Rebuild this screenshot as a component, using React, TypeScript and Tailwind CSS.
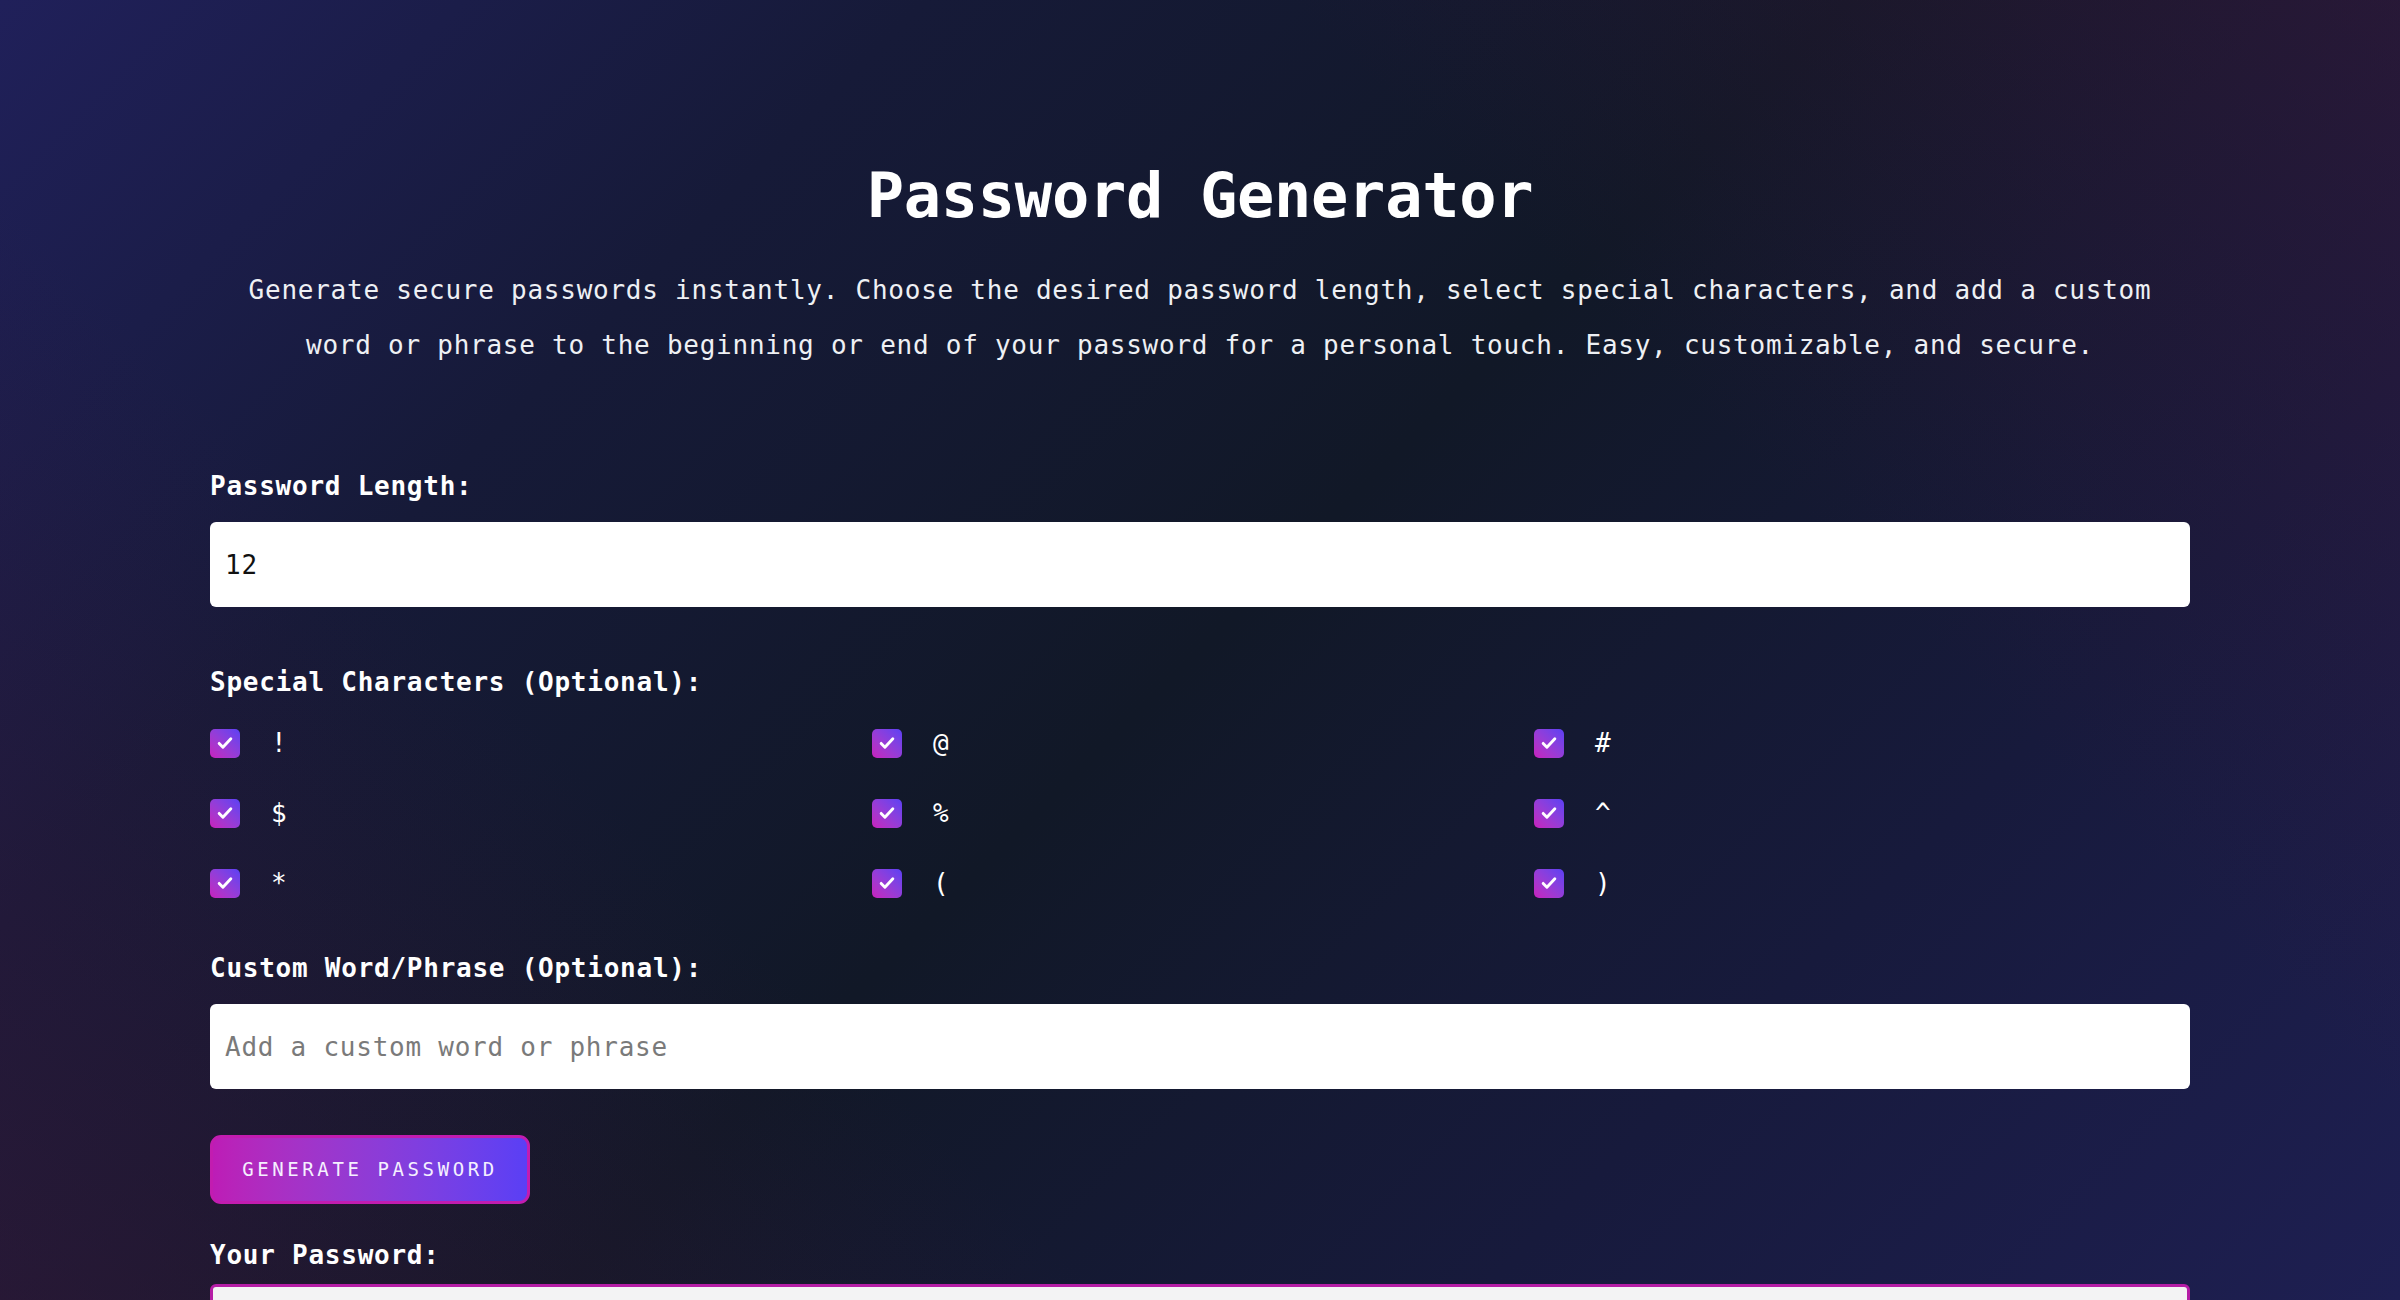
import React, { useState } from 'react';

const SPECIALS = ['!', '@', '#', '$', '%', '^', '*', '(', ')'];

// Gradient checkbox with a white tick
const CharBox: React.FC<{ char: string; checked: boolean; onToggle: () => void }> = ({ char, checked, onToggle }) => (
  <label className="flex items-center h-[36px] cursor-pointer select-none">
    <span
      onClick={onToggle}
      className={`w-[30px] h-[29px] rounded-[5px] flex items-center justify-center shrink-0 ${
        checked ? 'bg-gradient-to-tr from-[#c81cbc] to-[#5a3ff4]' : 'bg-white'
      }`}
    >
      {checked && (
        <svg viewBox="0 0 24 24" className="w-[20px] h-[20px]" fill="none" stroke="white" strokeWidth="3.5" strokeLinecap="round" strokeLinejoin="round">
          <path d="M5 12.5l4.5 4.5L19 7" />
        </svg>
      )}
    </span>
    <span className="ml-[31px] text-[26px] tracking-[0.75px] text-white leading-none">{char}</span>
  </label>
);

export default function App() {
  const [length, setLength] = useState('12');
  const [custom, setCustom] = useState('');
  const [selected, setSelected] = useState<string[]>(SPECIALS);
  const [password, setPassword] = useState('');

  const toggle = (c: string) =>
    setSelected((prev) => (prev.includes(c) ? prev.filter((x) => x !== c) : [...prev, c]));

  const generate = () => {
    const pool = 'abcdefghijklmnopqrstuvwxyzABCDEFGHIJKLMNOPQRSTUVWXYZ0123456789' + selected.join('');
    const n = Math.max(1, parseInt(length) || 12);
    let out = '';
    for (let i = 0; i < n; i++) out += pool[Math.floor(Math.random() * pool.length)];
    setPassword(out + custom);
  };

  return (
    <div className="min-h-screen bg-fixed bg-[linear-gradient(45deg,rgba(70,22,60,0.38)_0%,rgba(70,22,60,0)_30%,rgba(70,22,60,0)_70%,rgba(70,22,60,0.38)_100%),linear-gradient(135deg,#20205a_0%,#161a38_25%,#111827_50%,#171a3c_75%,#1e1f52_100%)] font-['DejaVu_Sans_Mono',monospace] text-white">
      <div className="w-[1980px] mx-auto pt-[159px] pb-[60px] flex flex-col">
        <h1 className="text-[62px] leading-[74px] font-bold text-center tracking-[-0.3px]">Password Generator</h1>
        <p className="mt-[30px] text-[26px] leading-[55px] tracking-[0.75px] text-center text-[#eef0f4]">
          Generate secure passwords instantly. Choose the desired password length, select special characters, and add a custom word or phrase to the beginning or end of your password for a personal touch. Easy, customizable, and secure.
        </p>

        <label className="mt-[95px] text-[26px] leading-[36px] font-bold tracking-[0.75px]">Password Length:</label>
        <input
          type="number"
          value={length}
          onChange={(e) => setLength(e.target.value)}
          className="mt-[18px] h-[85px] w-full rounded-[6px] bg-white text-[#111] px-[15px] text-[26px] tracking-[0.75px] outline-none [appearance:textfield] [&::-webkit-inner-spin-button]:appearance-none"
        />

        <div className="mt-[57px] text-[26px] leading-[36px] font-bold tracking-[0.75px]">Special Characters (Optional):</div>
        <div className="mt-[25px] grid grid-cols-[662px_662px_1fr] gap-y-[34px]">
          {SPECIALS.map((c) => (
            <CharBox key={c} char={c} checked={selected.includes(c)} onToggle={() => toggle(c)} />
          ))}
        </div>

        <label className="mt-[49px] text-[26px] leading-[36px] font-bold tracking-[0.75px]">Custom Word/Phrase (Optional):</label>
        <input
          type="text"
          value={custom}
          onChange={(e) => setCustom(e.target.value)}
          placeholder="Add a custom word or phrase"
          className="mt-[18px] h-[85px] w-full rounded-[6px] bg-white text-[#111] px-[15px] text-[26px] tracking-[0.75px] outline-none placeholder:text-[#7a7a7a]"
        />

        <div className="mt-[46px]">
          <button
            onClick={generate}
            className="h-[69px] w-[320px] rounded-[11px] border-[3px] border-[#c21cb0] bg-gradient-to-r from-[#bd1cb6] to-[#5a3ff5] text-[19px] tracking-[3.6px] text-[#f5f0ff] cursor-pointer"
          >
            GENERATE PASSWORD
          </button>
        </div>

        <label className="mt-[33px] text-[26px] leading-[36px] font-bold tracking-[0.75px]">Your Password:</label>
        <input
          type="text"
          readOnly
          value={password}
          className="mt-[11px] h-[85px] w-full rounded-[6px] border-[3px] border-[#b51da6] bg-[#f3f3f4] text-[#111] px-[15px] text-[26px] tracking-[0.75px] outline-none"
        />
      </div>
    </div>
  );
}
